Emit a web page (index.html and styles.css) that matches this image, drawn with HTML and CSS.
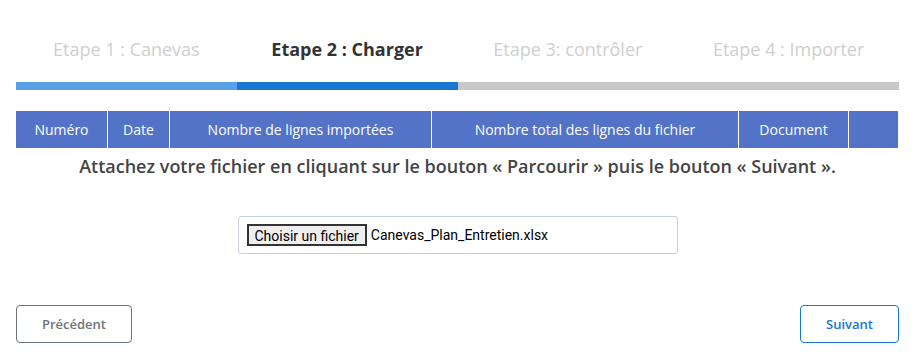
FILE: index.html
```html
<!DOCTYPE html>
<html lang="fr">
<head>
    <meta charset="UTF-8">
    <meta name="viewport" content="width=device-width, initial-scale=1.0">
    <title>Import - Charger</title>
    <link rel="stylesheet" href="styles.css">
</head>
<body>
    <div class="wizard">
        <div class="steps">
            <div class="step done">
                <div class="step-label">Etape 1 : Canevas</div>
                <div class="step-bar"></div>
            </div>
            <div class="step active">
                <div class="step-label">Etape 2 : Charger</div>
                <div class="step-bar"></div>
            </div>
            <div class="step">
                <div class="step-label">Etape 3: contrôler</div>
                <div class="step-bar"></div>
            </div>
            <div class="step">
                <div class="step-label">Etape 4 : Importer</div>
                <div class="step-bar"></div>
            </div>
        </div>

        <table class="imports">
            <thead>
                <tr>
                    <th class="col-num">Numéro</th>
                    <th class="col-date">Date</th>
                    <th class="col-imp">Nombre de lignes importées</th>
                    <th class="col-total">Nombre total des lignes du fichier</th>
                    <th class="col-doc">Document</th>
                    <th class="col-act"></th>
                </tr>
            </thead>
        </table>

        <p class="hint">Attachez votre fichier en cliquant sur le bouton « Parcourir » puis le bouton « Suivant ».</p>

        <div class="upload">
            <label class="file-field">
                <span class="file-btn">Choisir un fichier</span>
                <span class="file-name">Canevas_Plan_Entretien.xlsx</span>
            </label>
        </div>

        <div class="actions">
            <button class="btn btn-prev">Précédent</button>
            <button class="btn btn-next">Suivant</button>
        </div>
    </div>
</body>
</html>
```

FILE: styles.css
```css
body {
    margin: 0;
    font-family: "Open Sans", Arial, sans-serif;
    background: #fff;
}
.wizard {
    padding: 0 17px 0 16px;
}
.steps {
    display: flex;
    padding-top: 37px;
}
.step {
    flex: 1;
    text-align: center;
}
.step-label {
    font-size: 18px;
    line-height: 25px;
    color: #cfcfcf;
    height: 25px;
}
.step.active .step-label {
    color: #333;
    font-weight: 700;
}
.step-bar {
    margin-top: 20px;
    height: 8px;
    background: #c8c8c8;
}
.step.done .step-bar {
    background: #5aa0e6;
}
.step.active .step-bar {
    background: #1976d2;
}
.imports {
    width: 882px;
    margin-top: 21px;
    border-collapse: collapse;
    table-layout: fixed;
}
.imports th {
    background: #5373c8;
    color: #fff;
    font-weight: 400;
    font-size: 14px;
    height: 37px;
    padding: 0;
    border-left: 1px solid #fff;
}
.imports th:first-child {
    border-left: none;
}
.col-num { width: 91px; }
.col-date { width: 61px; }
.col-imp { width: 261px; }
.col-total { width: 306px; }
.col-doc { width: 109px; }
.col-act { width: auto; }
.hint {
    margin: 6px 0 0;
    text-align: center;
    font-size: 18px;
    font-weight: 600;
    color: #444;
    line-height: 25px;
}
.upload {
    display: flex;
    justify-content: center;
    margin-top: 37px;
}
.file-field {
    box-sizing: border-box;
    width: 440px;
    height: 38px;
    border: 1px solid #c8d0dc;
    border-radius: 3px;
    display: flex;
    align-items: center;
    padding-left: 8px;
    font-family: Roboto, Arial, sans-serif;
    font-size: 14px;
    color: #000;
}
.file-btn {
    background: #efefef;
    border: 2px solid #333;
    padding: 0 6px;
    height: 22px;
    line-height: 20px;
    box-sizing: border-box;
    margin-right: 4px;
}
.actions {
    display: flex;
    justify-content: space-between;
    margin-top: 51px;
}
.btn {
    height: 38px;
    background: #fff;
    border-radius: 4px;
    font-family: "Open Sans", Arial, sans-serif;
    font-size: 13px;
    font-weight: 600;
    cursor: pointer;
}
.btn-prev {
    width: 116px;
    border: 1px solid #6c757d;
    color: #6c757d;
}
.btn-next {
    width: 99px;
    border: 1px solid #1976d2;
    color: #1976d2;
}
```
